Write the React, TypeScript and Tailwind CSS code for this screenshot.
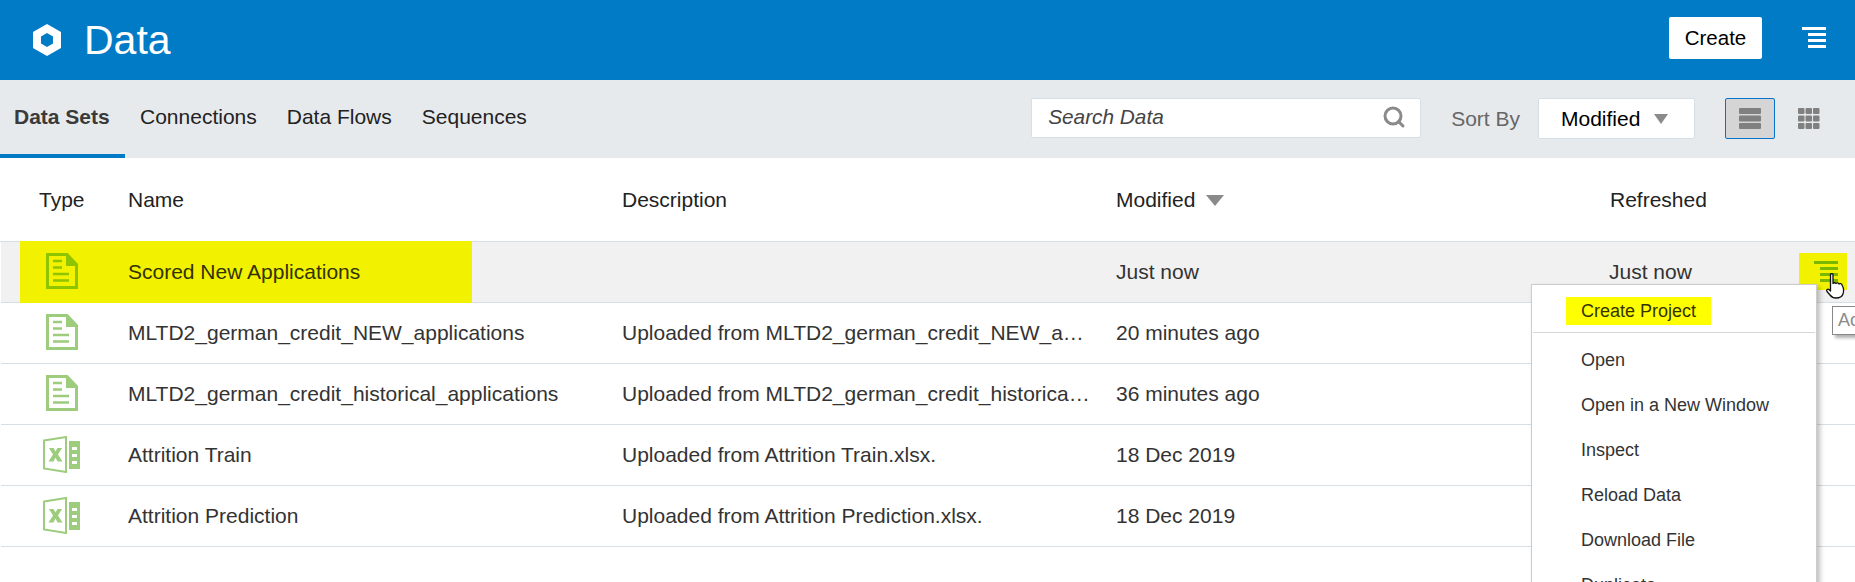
import { Search } from "lucide-react"

const rows = [
  { kind: "doc", name: "Scored New Applications", description: "", modified: "Just now", refreshed: "Just now" },
  {
    kind: "doc",
    name: "MLTD2_german_credit_NEW_applications",
    description: "Uploaded from MLTD2_german_credit_NEW_applications.csv.",
    modified: "20 minutes ago",
    refreshed: "",
  },
  {
    kind: "doc",
    name: "MLTD2_german_credit_historical_applications",
    description: "Uploaded from MLTD2_german_credit_historical_applications.csv.",
    modified: "36 minutes ago",
    refreshed: "",
  },
  { kind: "xls", name: "Attrition Train", description: "Uploaded from Attrition Train.xlsx.", modified: "18 Dec 2019", refreshed: "" },
  { kind: "xls", name: "Attrition Prediction", description: "Uploaded from Attrition Prediction.xlsx.", modified: "18 Dec 2019", refreshed: "" },
]

const menuItems = ["Open", "Open in a New Window", "Inspect", "Reload Data", "Download File", "Duplicate"]

function DocIcon({ color }: { color: string }) {
  return (
    <svg width="32" height="36" viewBox="0 0 32 36" fill="none">
      <path d="M1.5 1.5H21L30.5 11.5V34.5H1.5Z" stroke={color} strokeWidth="3" />
      <path d="M20 0L32 12V13H20Z" fill={color} />
      <path d="M7 8H16M7 14.5H16M7 21H23M7 27.5H23" stroke={color} strokeWidth="2.6" />
    </svg>
  )
}

function XlsIcon({ color }: { color: string }) {
  return (
    <svg width="37" height="37" viewBox="0 0 37 37" fill="none">
      <path d="M1 4.5L23 1V36L1 32.5Z" stroke={color} strokeWidth="2" />
      <path d="M6 12H10.5L12.5 15.5L14.5 12H19L15 18.5L19.5 25.5H14.5L12.5 21.5L10.5 25.5H5.5L10 18.5Z" fill={color} />
      <path d="M26 5H37V33H26Z" fill={color} />
      <path d="M29 11H34V14H29ZM29 18H34V21H29ZM29 25H34V28H29Z" fill="white" />
    </svg>
  )
}

function ActionIcon({ color }: { color: string }) {
  return (
    <svg width="24" height="21" viewBox="0 0 24 21" fill={color}>
      <rect x="0" y="0" width="24" height="3" />
      <rect x="6" y="6" width="18" height="3" />
      <rect x="6" y="12" width="18" height="3" />
      <rect x="6" y="18" width="18" height="3" />
    </svg>
  )
}

function ListIcon() {
  return (
    <svg width="22" height="21" viewBox="0 0 22 21" fill="#808080">
      <rect x="0" y="0" width="22" height="6" rx="1" />
      <rect x="0" y="7.5" width="22" height="6" rx="1" />
      <rect x="0" y="15" width="22" height="6" rx="1" />
    </svg>
  )
}

function GridIcon() {
  const cells = [0, 7.5, 15]
  return (
    <svg width="22" height="21" viewBox="0 0 22 21" fill="#808080">
      {cells.map((y) => cells.map((x) => <rect key={`${x}-${y}`} x={x} y={y} width="6.5" height="6" rx="1" />))}
    </svg>
  )
}

export default function App() {
  return (
    <div className="relative h-[582px] w-[1855px] overflow-hidden bg-white font-['Liberation_Sans',Arial,sans-serif] text-[#333]">
      <header className="flex h-[80px] items-center bg-[#027bc7] pl-[33px] pr-[29px] text-white">
        <svg width="28" height="32" viewBox="0 0 28 32" className="mr-[23px]">
          <path d="M14 0L28 8V24L14 32L0 24V8ZM14 9L8 12.5V19.5L14 23L20 19.5V12.5Z" fill="white" fillRule="evenodd" />
        </svg>
        <h1 className="text-[41px] leading-none">Data</h1>
        <button className="mb-[4px] ml-auto h-[42px] w-[93px] rounded-[2px] bg-white text-[20.5px] text-black">Create</button>
        <div className="mb-[5px] ml-[40px]">
          <ActionIcon color="white" />
        </div>
      </header>

      <div className="flex h-[78px] items-stretch bg-[#e7eaed] text-[21px]">
        <div className="flex w-[125px] items-center border-b-4 border-[#027bc7] pl-[14px] font-bold text-[#3a3a3a]">
          <span className="whitespace-nowrap">Data Sets</span>
        </div>
        <div className="flex gap-[30px] pl-[15px] text-[#222]">
          <span className="flex items-center pb-[4px]">Connections</span>
          <span className="flex items-center pb-[4px]">Data Flows</span>
          <span className="flex items-center pb-[4px]">Sequences</span>
        </div>
        <div className="ml-auto flex items-start pt-[18px] pr-[35px]">
          <div className="flex h-[40px] w-[390px] items-center justify-between rounded-[2px] border border-[#d6dfe6] bg-white pb-[2px] pl-[16px] pr-[14px] text-[20.8px] italic text-[#444]">
            <span>Search Data</span>
            <Search size={24} color="#8a8a8a" strokeWidth={3} />
          </div>
          <span className="ml-[30px] mt-[5px] text-[#666]">Sort By</span>
          <div className="ml-[18px] flex h-[41px] w-[157px] items-center rounded-[2px] border border-[#d6dfe6] bg-white pl-[22px] text-black">
            <span>Modified</span>
            <span className="ml-[14px] h-0 w-0 border-x-[7px] border-t-[10px] border-x-transparent border-t-[#8a8a8a]" />
          </div>
          <div className="ml-[30px] flex h-[41px] w-[50px] items-center justify-center rounded-[2px] border border-[#0572ce] bg-[#d5d5d5]">
            <ListIcon />
          </div>
          <div className="ml-[23px] mt-[10px]">
            <GridIcon />
          </div>
        </div>
      </div>

      <div className="grid h-[84px] grid-cols-[128px_494px_494px_494px_1fr] items-center border-b border-[#d6dfe6] pt-[1px] text-[21px] text-[#222]">
        <span className="pl-[39px]">Type</span>
        <span>Name</span>
        <span>Description</span>
        <span className="flex items-center gap-[11px]">
          Modified
          <span className="h-0 w-0 border-x-[9px] border-t-[11px] border-x-transparent border-t-[#8a8a8a]" />
        </span>
        <span>Refreshed</span>
      </div>

      {rows.map((row, i) => {
        const selected = i === 0
        const iconColor = selected ? "#8fc400" : "#9ccc7c"
        return (
          <div
            key={row.name}
            className={`relative ml-[1px] grid h-[61px] grid-cols-[127px_494px_494px_494px_1fr] items-center border-b border-[#d6dfe6] text-[21px] ${selected ? "bg-[#f1f1f1]" : "bg-white"}`}
          >
            {selected && <div className="absolute left-[19px] top-[-1px] h-[65px] w-[452px] bg-[#f2f200]" />}
            <div className="relative flex justify-center">
              <div className={row.kind === "doc" ? "ml-[-6px] mb-[2px]" : "ml-[-7px] mb-[1px]"}>
                {row.kind === "doc" ? <DocIcon color={iconColor} /> : <XlsIcon color={iconColor} />}
              </div>
            </div>
            <span className={`relative truncate ${selected ? "text-[#333300]" : ""}`}>{row.name}</span>
            <span className="truncate pr-[25px]">{row.description}</span>
            <span>{row.modified}</span>
            <span className="ml-[-1px]">{row.refreshed}</span>
          </div>
        )
      })}

      {/* row action, highlighted by hand in the screenshot */}
      <div className="absolute left-[1799px] top-[253px] flex h-[37px] w-[48px] items-center justify-center bg-[#f2f200] pl-[6px]">
        <ActionIcon color="#7ab800" />
      </div>

      {/* open menu, runs off the bottom of the page */}
      <div className="absolute left-[1531px] top-[284px] w-[286px] border border-[#cccccc] bg-white text-[18px] text-[#333] shadow-[3px_3px_5px_rgba(0,0,0,0.25)]">
        <div className="flex h-[47px] items-start pl-[34px] pt-[12px]">
          <span className="flex h-[28px] items-center bg-[#ffff00] px-[15px] text-[#333300]">Create Project</span>
        </div>
        <div className="mx-[1px] border-t border-[#d6d6d6]" />
        <ul className="pt-[5px]">
          {menuItems.map((item) => (
            <li key={item} className="flex h-[45px] items-center pl-[49px]">
              {item}
            </li>
          ))}
        </ul>
      </div>

      {/* tooltip under the pointer */}
      <div className="absolute left-[1832px] top-[306px] h-[29px] w-[80px] border border-[#888] bg-white pl-[5px] text-[18px] leading-[27px] text-[#8a8a8a] shadow-[3px_3px_3px_rgba(0,0,0,0.3)]">
        Actions
      </div>

      {/* hand cursor */}
      <svg className="absolute left-[1826px] top-[273px]" width="19" height="26" viewBox="0 0 19 26">
        <path
          d="M4.5 1.5C4.5 0.5 7 0.5 7 1.5V10.5C7.5 9.5 9.5 9.5 10 10.5C10.5 9.7 12.5 9.7 13 11C13.8 10.2 15.8 10.5 16 12C17.5 14.5 18 18 17 21C16 24 13 25 10 25C7 25 5.5 24 4 22L1 18.5C0 17 1.8 15.5 3 16.5L4.5 18Z"
          fill="white"
          stroke="#111"
          strokeWidth="1.3"
          strokeLinejoin="round"
        />
      </svg>
    </div>
  )
}
